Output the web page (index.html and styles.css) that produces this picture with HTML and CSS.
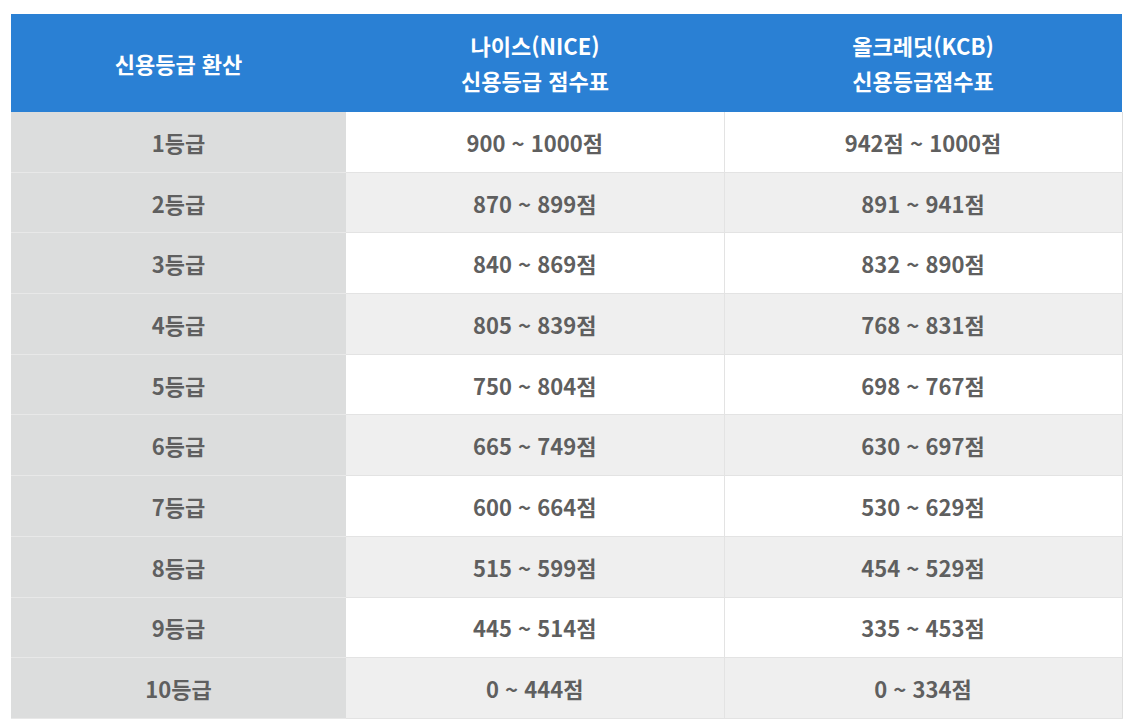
FILE: index.html
```html
<!DOCTYPE html>
<html lang="ko">
<head>
<meta charset="utf-8">
<title>신용등급 점수표</title>
<link rel="stylesheet" href="styles.css">
</head>
<body>
<table class="grade-table">
  <colgroup>
    <col class="c1"><col class="c2"><col class="c3">
  </colgroup>
  <thead>
    <tr>
      <th>신용등급 환산</th>
      <th>나이스(NICE)<br>신용등급 점수표</th>
      <th>올크레딧(KCB)<br>신용등급점수표</th>
    </tr>
  </thead>
  <tbody>
    <tr><td>1등급</td><td>900 ~ 1000점</td><td>942점 ~ 1000점</td></tr>
    <tr><td>2등급</td><td>870 ~ 899점</td><td>891 ~ 941점</td></tr>
    <tr><td>3등급</td><td>840 ~ 869점</td><td>832 ~ 890점</td></tr>
    <tr><td>4등급</td><td>805 ~ 839점</td><td>768 ~ 831점</td></tr>
    <tr><td>5등급</td><td>750 ~ 804점</td><td>698 ~ 767점</td></tr>
    <tr><td>6등급</td><td>665 ~ 749점</td><td>630 ~ 697점</td></tr>
    <tr><td>7등급</td><td>600 ~ 664점</td><td>530 ~ 629점</td></tr>
    <tr><td>8등급</td><td>515 ~ 599점</td><td>454 ~ 529점</td></tr>
    <tr><td>9등급</td><td>445 ~ 514점</td><td>335 ~ 453점</td></tr>
    <tr><td>10등급</td><td>0 ~ 444점</td><td>0 ~ 334점</td></tr>
  </tbody>
</table>
</body>
</html>
```

FILE: styles.css
```css
html, body {
  margin: 0;
  padding: 0;
  background: #ffffff;
}
body {
  padding: 14px 0 0 11px;
  font-family: "Noto Sans CJK KR", "Noto Sans", sans-serif;
}
.grade-table {
  width: 1111px;
  border-collapse: collapse;
  table-layout: fixed;
  font-size: 22px;
  font-weight: 700;
}
.grade-table col.c1 { width: 335px; }
.grade-table col.c2 { width: 378px; }
.grade-table col.c3 { width: 398px; }
.grade-table th {
  background: #2a80d4;
  color: #ffffff;
  height: 98px;
  padding: 0;
  line-height: 35px;
  font-weight: 700;
  text-align: center;
  vertical-align: middle;
}
.grade-table td {
  height: 59.7px;
  padding: 0;
  text-align: center;
  vertical-align: middle;
  color: #5f5f5f;
  line-height: 26px;
  border-bottom: 1px solid #e3e3e3;
  background: #ffffff;
}
.grade-table tbody tr:nth-child(even) td {
  background: #efefef;
}
.grade-table tbody td:first-child,
.grade-table tbody tr:nth-child(even) td:first-child {
  background: #dcdddd;
  border-bottom-color: #e8e8e8;
}
.grade-table tbody td:nth-child(2) {
  border-right: 1px solid #e3e3e3;
}
.grade-table tbody td:last-child {
  border-right: 1px solid #dedede;
}
```
